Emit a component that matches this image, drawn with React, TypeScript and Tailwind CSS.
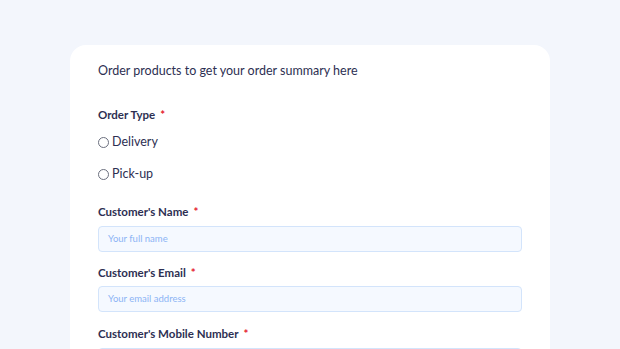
import React from "react";

function Label({ text }: { text: string }) {
  return (
    <div className="flex items-center text-[11.5px] font-bold text-[#2d2f52] leading-none h-[12px]">
      <span>{text}</span>
      <span className="ml-[5px] text-[#e5202e]">*</span>
    </div>
  );
}

function Radio({ text }: { text: string }) {
  return (
    <label className="flex items-center gap-[3px] text-[12.5px] text-[#2d2f52] leading-none h-[13px]">
      <span className="w-[11px] h-[11px] -mt-[1px] rounded-full border border-[#6b6f7e] bg-white inline-block" />
      <span>{text}</span>
    </label>
  );
}

function Input({ placeholder }: { placeholder: string }) {
  return (
    <div className="h-[26px] w-full rounded-[4px] border border-[#d3e4fb] bg-[#f5f9ff] flex items-center px-[9px] text-[9.5px] text-[#8cb4f5]">
      {placeholder}
    </div>
  );
}

export default function App() {
  return (
    <div
      className="w-[620px] h-[349px] overflow-hidden bg-[#f3f6fc] pt-[45px] px-[70px]"
      style={{ fontFamily: "Lato, 'Noto Sans', sans-serif" }}
    >
      <div className="bg-white rounded-t-[16px] h-[400px] px-[28px] pt-[20px]">
        <div className="text-[12.5px] text-[#2d2f52] leading-none h-[12px]">
          Order products to get your order summary here
        </div>
        <div className="mt-[32px]">
          <Label text="Order Type" />
        </div>
        <div className="mt-[15px] flex flex-col gap-[19px]">
          <Radio text="Delivery" />
          <Radio text="Pick-up" />
        </div>
        <div className="mt-[25px]">
          <Label text="Customer's Name" />
        </div>
        <div className="mt-[8px]">
          <Input placeholder="Your full name" />
        </div>
        <div className="mt-[15px]">
          <Label text="Customer's Email" />
        </div>
        <div className="mt-[7px]">
          <Input placeholder="Your email address" />
        </div>
        <div className="mt-[16px]">
          <Label text="Customer's Mobile Number" />
        </div>
        <div className="mt-[8px]">
          <Input placeholder="" />
        </div>
      </div>
    </div>
  );
}
